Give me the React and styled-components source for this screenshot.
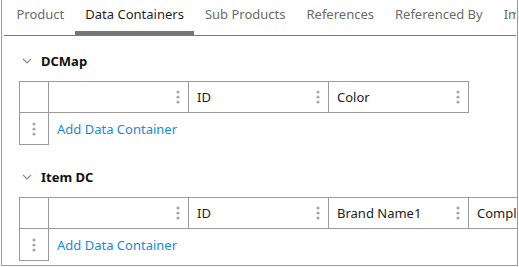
import React from 'react';
import styled, { createGlobalStyle } from 'styled-components';

const GlobalStyle = createGlobalStyle`
  html, body { margin: 0; padding: 0; background: #fff; }
  body { font-family: "Noto Sans", "Open Sans", Arial, sans-serif; }
`;

const Frame = styled.div`
  margin-left: 1px;
  width: 515px;
  height: 265px;
  border: 1px solid #9a9a9a;
  border-top: none;
  overflow: hidden;
  position: relative;
`;

const TabBar = styled.div`
  display: flex;
  margin: 0 1px 0 2px;
  height: 35px;
  border-bottom: 1px solid #7a7a7a;
  white-space: nowrap;
  overflow: hidden;
  padding-left: 2px;
`;

const Tab = styled.div`
  flex: none;
  padding: 4px 10.5px 0;
  font-size: 13px;
  line-height: 20px;
  color: ${p => (p.active ? '#1f1f1f' : '#6b6b6b')};
  border-bottom: 4px solid ${p => (p.active ? '#767676' : 'transparent')};
  height: 27px;
  box-sizing: content-box;
`;

const Content = styled.div`
  padding: 14px 0 0 17px;
`;

const Section = styled.section`
  & + & { margin-top: 21px; }
`;

const Heading = styled.div`
  display: flex;
  align-items: center;
  height: 22px;
  margin-bottom: 9px;
  padding-left: 3px;
  gap: 9px;
  font-size: 13px;
  font-weight: 700;
  color: #111;
`;

const Grid = styled.div`
  display: grid;
  grid-template-columns: 30px repeat(${p => p.cols}, 140px);
  grid-auto-rows: auto;
  width: max-content;
`;

const HeadCell = styled.div`
  height: 30px;
  display: flex;
  align-items: center;
  justify-content: space-between;
  padding: 0 8px;
  border: 1px solid #9a9a9a;
  border-left: ${p => (p.first ? '1px solid #9a9a9a' : 'none')};
  font-size: 13px;
  color: #222;
  white-space: nowrap;
`;

const HandleCell = styled.div`
  height: 31px;
  display: flex;
  align-items: center;
  justify-content: center;
  border: 1px solid #9a9a9a;
  border-top: none;
`;

const AddLink = styled.a`
  grid-column: 2 / -1;
  display: flex;
  align-items: center;
  padding-left: 8px;
  font-size: 13px;
  color: #1a8bd4;
  cursor: pointer;
`;

const Dots = () => (
  <svg width="4" height="14" viewBox="0 0 4 14">
    <circle cx="2" cy="2" r="1.6" fill="#a8a8a8" />
    <circle cx="2" cy="7" r="1.6" fill="#a8a8a8" />
    <circle cx="2" cy="12" r="1.6" fill="#a8a8a8" />
  </svg>
);

const Chevron = () => (
  <svg width="10" height="6" viewBox="0 0 10 6">
    <polyline points="1,1 5,5 9,1" fill="none" stroke="#8a8a8a" strokeWidth="1.2" />
  </svg>
);

const tabs = ['Product', 'Data Containers', 'Sub Products', 'References', 'Referenced By', 'Images'];

const sections = [
  { title: 'DCMap', cols: ['', 'ID', 'Color'] },
  { title: 'Item DC', cols: ['', 'ID', 'Brand Name1', 'Complexity'] },
];

export default function App() {
  return (
    <>
      <GlobalStyle />
      <Frame>
        <TabBar>
          {tabs.map(t => (
            <Tab key={t} active={t === 'Data Containers'}>{t}</Tab>
          ))}
        </TabBar>
        <Content>
          {sections.map(s => (
            <Section key={s.title}>
              <Heading>
                <Chevron />
                {s.title}
              </Heading>
              <Grid cols={s.cols.length}>
                <HeadCell first />
                {s.cols.map((c, i) => (
                  <HeadCell key={i}>
                    <span>{c}</span>
                    <Dots />
                  </HeadCell>
                ))}
                <HandleCell><Dots /></HandleCell>
                <AddLink>Add Data Container</AddLink>
              </Grid>
            </Section>
          ))}
        </Content>
      </Frame>
    </>
  );
}
